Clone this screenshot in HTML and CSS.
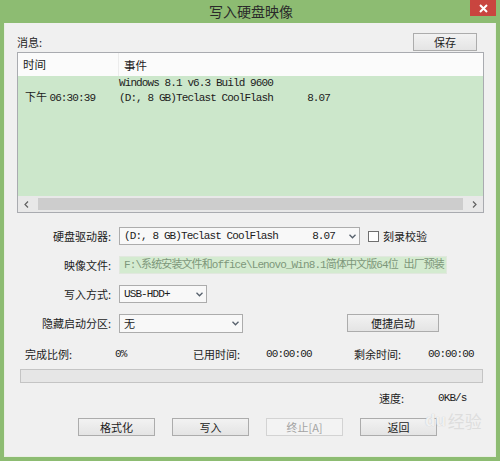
FILE: index.html
```html
<!DOCTYPE html>
<html lang="zh-CN">
<head>
<meta charset="UTF-8" />
<title>写入硬盘映像</title>
<link rel="stylesheet" href="styles.css">
</head>
<body>

<div class="window">
  <!-- TITLE BAR -->
  <div class="titlebar">
    <span></span>
    <span class="title">写入硬盘映像</span>
    <button class="close" aria-label="关闭">
      <svg width="9" height="9" viewBox="0 0 9 9"><path d="M1 1 L8 8 M8 1 L1 8" stroke="#fff" stroke-width="2"/></svg>
    </button>
  </div>

  <div class="client">
    <!-- MESSAGES -->
    <div class="msg-head">
      <span>消息:</span>
      <button class="btn btn-save">保存</button>
    </div>

    <div class="log">
      <div class="log-head">
        <span class="col-time">时间</span>
        <span class="col-event">事件</span>
      </div>
      <div class="log-body">
        <div class="log-row">
          <span class="col-time">下午 <span class="mono">06:30:39</span></span>
          <div class="col-event">
            <div class="mono">Windows 8.1 v6.3 Build 9600</div>
            <div class="mono">(D:, 8 GB)Teclast CoolFlash      8.07</div>
          </div>
        </div>
      </div>
      <div class="hscroll">
        <svg width="5" height="7" viewBox="0 0 5 7"><path d="M4 0.5 L1 3.5 L4 6.5" fill="none" stroke="#606060" stroke-width="1.2"/></svg>
        <div class="thumb"></div>
        <svg width="5" height="7" viewBox="0 0 5 7"><path d="M1 0.5 L4 3.5 L1 6.5" fill="none" stroke="#606060" stroke-width="1.2"/></svg>
      </div>
    </div>

    <!-- FORM -->
    <div class="form">
      <div class="form-row">
        <label class="form-label">硬盘驱动器:</label>
        <div class="select select-drive">
          <span class="mono">(D:, 8 GB)Teclast CoolFlash      8.07</span>
          <svg class="chev" width="7" height="5" viewBox="0 0 7 5"><path d="M0.5 0.8 L3.5 3.8 L6.5 0.8" fill="none" stroke="#56606c" stroke-width="1.3"/></svg>
        </div>
        <span class="check"><span class="box"></span>刻录校验</span>
      </div>
      <div class="form-row">
        <label class="form-label">映像文件:</label>
        <div class="field mono">F:\系统安装文件和office\Lenovo_Win8.1简体中文版64位 出厂预装</div>
      </div>
      <div class="form-row">
        <label class="form-label">写入方式:</label>
        <div class="select select-mode">
          <span class="mono">USB-HDD+</span>
          <svg class="chev" width="7" height="5" viewBox="0 0 7 5"><path d="M0.5 0.8 L3.5 3.8 L6.5 0.8" fill="none" stroke="#56606c" stroke-width="1.3"/></svg>
        </div>
      </div>
      <div class="form-row">
        <label class="form-label">隐藏启动分区:</label>
        <div class="select select-hidden">
          <span>无</span>
          <svg class="chev" width="7" height="5" viewBox="0 0 7 5"><path d="M0.5 0.8 L3.5 3.8 L6.5 0.8" fill="none" stroke="#56606c" stroke-width="1.3"/></svg>
        </div>
        <button class="btn btn-quick">便捷启动</button>
      </div>
    </div>

    <!-- PROGRESS -->
    <div class="stats">
      <span class="s1">完成比例:</span>
      <span class="s2 mono">0%</span>
      <span class="s3">已用时间:</span>
      <span class="s4 mono">00:00:00</span>
      <span class="s5">剩余时间:</span>
      <span class="mono">00:00:00</span>
    </div>
    <div class="progress"></div>
    <div class="speed">
      <span class="speed-label">速度:</span>
      <span class="mono">0KB/s</span>
    </div>

    <!-- ACTIONS -->
    <div class="actions">
      <button class="btn">格式化</button>
      <button class="btn">写入</button>
      <button class="btn btn-disabled">终止[A]</button>
      <button class="btn">返回</button>
    </div>

    <div class="watermark"><span class="paw">du</span>经验</div>
  </div>
</div>

</body>
</html>
```

FILE: styles.css
```css
/* Reset */
*, *::before, *::after {
  box-sizing: border-box;
}
body {
  margin: 0;
  font-family: "Noto Sans CJK SC", "Liberation Sans", sans-serif;
  font-size: 11px;
  color: #1c1c1c;
}
button {
  font-family: inherit;
  font-size: 11px;
  color: inherit;
  padding: 0;
  cursor: pointer;
}

.mono {
  font-family: "Liberation Mono", "Noto Sans CJK SC", monospace;
  font-size: 11px;
  letter-spacing: -0.9px;
  white-space: pre;
}

/* Window frame */
.window {
  width: 500px;
  height: 461px;
  background: #8dbc72;
  display: flex;
  flex-direction: column;
}
.titlebar {
  height: 23px;
  display: grid;
  grid-template-columns: 1fr auto 1fr;
  align-items: start;
}
.title {
  font-size: 14px;
  line-height: 22px;
  color: #2a2a2a;
  padding-left: 2px;
}
.close {
  justify-self: end;
  margin-right: 4px;
  width: 26px;
  height: 16px;
  border: none;
  background: #c9453f;
  display: flex;
  align-items: center;
  justify-content: center;
}

.client {
  flex: 1;
  margin: 0 4px 4px;
  background: #f0f0f0;
  border: 1px solid #e9efe4;
  border-top: none;
  padding: 0 0 0 12px;
  position: relative;
}

/* Buttons */
.btn {
  height: 18px;
  border: 1px solid #acacac;
  background: linear-gradient(#f2f2f2, #e4e4e4);
  line-height: 15px;
}
.btn-disabled {
  color: #a3a3a3;
  border-color: #d3d3d3;
  background: #f3f3f3;
}

/* Messages */
.msg-head {
  margin-top: 10px;
  height: 18px;
  width: 460px;
  display: flex;
  justify-content: space-between;
  align-items: flex-end;
}
.msg-head > span {
  line-height: 14px;
  margin-bottom: 2px;
}
.btn-save {
  width: 64px;
}

.log {
  margin-top: 1px;
  width: 467px;
  height: 161px;
  border: 1px solid #a9abb0;
  background: #cce7cb;
  display: flex;
  flex-direction: column;
}
.log-head {
  height: 23px;
  background: #fbfbfb;
  display: flex;
  align-items: center;
  font-size: 11.5px;
}
.log-head .col-time {
  width: 101px;
  padding-left: 5px;
  border-right: 1px solid #ececec;
  line-height: 23px;
}
.log-head .col-event {
  padding-left: 5px;
}
.log-body {
  flex: 1;
}
.log-row {
  display: flex;
  align-items: flex-end;
  line-height: 15px;
}
.log-row .col-time {
  width: 101px;
  padding-left: 7px;
}

.hscroll {
  height: 16px;
  background: #e8e8e8;
  display: flex;
  align-items: center;
  gap: 6px;
  padding: 0 6px;
}
.thumb {
  flex: 1;
  height: 12px;
  margin: 0 3px;
  background: #cdcdcd;
}

/* Form */
.form {
  margin-top: 14px;
  display: flex;
  flex-direction: column;
  gap: 11px;
}
.form-row {
  height: 18px;
  display: flex;
  align-items: center;
}
.form-label {
  width: 94px;
  margin-right: 8px;
  text-align: right;
}
.select {
  height: 18px;
  border: 1px solid #acacac;
  background: #f8f8f8;
  display: flex;
  align-items: center;
  justify-content: space-between;
  padding: 0 3px 0 4px;
}
.select-drive { width: 241px; }
.select-mode { width: 88px; }
.select-hidden { width: 124px; height: 19px; }
.chev {
  flex: none;
}
.check {
  margin-left: 8px;
  display: flex;
  align-items: center;
  gap: 4px;
}
.box {
  width: 11px;
  height: 11px;
  border: 1px solid #6f6f6f;
  background: #fff;
}
.field {
  width: 328px;
  height: 18px;
  line-height: 16px;
  padding-left: 4px;
  background: #d4ebd0;
  border: 1px solid #e1e8de;
  color: #7d977a;
  overflow: hidden;
}
.btn-quick {
  margin-left: 104px;
  width: 92px;
  height: 18px;
}

/* Progress */
.stats {
  margin-top: 15px;
  padding-left: 8px;
  height: 14px;
  display: flex;
  align-items: center;
}
.s1 { width: 90px; }
.s2 { width: 78px; }
.s3 { width: 73px; }
.s4 { width: 88px; }
.s5 { width: 74px; }
.progress {
  margin: 8px 0 0 3px;
  width: 463px;
  height: 14px;
  border: 1px solid #c4c4c4;
  background: #e6e6e6;
}
.speed {
  margin-top: 8px;
  padding-left: 362px;
  height: 14px;
  display: flex;
  align-items: center;
}
.speed-label {
  width: 59px;
}

.actions {
  margin: 13px 0 0 61px;
  display: flex;
  gap: 17px;
}
.actions .btn {
  width: 77px;
}

/* Watermark over the dialog */
.watermark {
  position: absolute;
  left: 420px;
  top: 385px;
  font-size: 17px;
  color: rgba(215, 215, 215, 0.75);
  display: flex;
  align-items: center;
  gap: 2px;
  pointer-events: none;
}
.paw {
  font-family: "Liberation Sans", sans-serif;
  font-weight: bold;
  font-size: 17px;
  color: rgba(255, 255, 255, 0.8);
  text-shadow: 0 0 1px #b8b8b8;
}
```
